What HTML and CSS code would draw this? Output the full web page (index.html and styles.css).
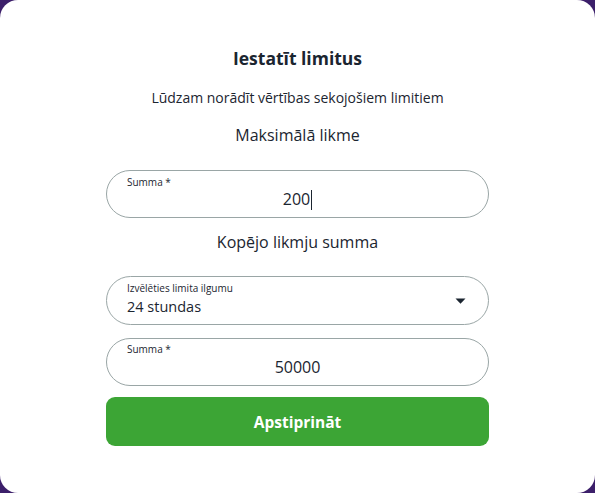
FILE: index.html
```html
<!DOCTYPE html>
<html lang="lv">
<head>
<meta charset="utf-8">
<link rel="stylesheet" href="styles.css">
</head>
<body>
<div class="card">
  <div class="content">
    <h1 class="title">Iestatīt limitus</h1>
    <p class="subtitle">Lūdzam norādīt vērtības sekojošiem limitiem</p>
    <h2 class="section">Maksimālā likme</h2>
    <div class="field field-center">
      <span class="label">Summa *</span>
      <span class="value">200<span class="caret"></span></span>
    </div>
    <h2 class="section section-2">Kopējo likmju summa</h2>
    <div class="field field-select">
      <div class="select-text">
        <span class="label">Izvēlēties limita ilgumu</span>
        <span class="value value-left">24 stundas</span>
      </div>
      <svg class="arrow" width="11" height="6" viewBox="0 0 11 6"><path d="M0.5 0.5 H10.5 L5.5 5.8 Z" fill="#1b2530"/></svg>
    </div>
    <div class="field field-center field-3">
      <span class="label">Summa *</span>
      <span class="value">50000</span>
    </div>
    <button class="btn">Apstiprināt</button>
  </div>
</div>
</body>
</html>
```
FILE: styles.css
```css
html, body {
  margin: 0;
  padding: 0;
  height: 100%;
}
body {
  background: #3c1f6a;
  font-family: "Open Sans", "Noto Sans", sans-serif;
  color: #1b2530;
}
.card {
  background: #fff;
  height: 493px;
  border-radius: 18px;
  display: flex;
  justify-content: center;
}
.content {
  width: 383px;
  display: flex;
  flex-direction: column;
  align-items: stretch;
  padding-top: 46px;
}
.title {
  margin: 0;
  font-size: 17.5px;
  font-weight: 700;
  text-align: center;
  line-height: 24px;
}
.subtitle {
  margin: 18px 0 0;
  font-size: 14px;
  text-align: center;
  line-height: 20px;
}
.section {
  margin: 16px 0 0;
  font-size: 16px;
  font-weight: 400;
  text-align: center;
  line-height: 22px;
}
.field {
  box-sizing: border-box;
  height: 48px;
  border: 1px solid #9aa6a6;
  border-radius: 25px;
  margin-top: 24px;
  position: relative;
}
.label {
  font-size: 10px;
  line-height: 12px;
  display: block;
}
.field-center {
  display: flex;
  align-items: flex-end;
  justify-content: center;
  padding-bottom: 7px;
}
.field-center .label {
  position: absolute;
  left: 20px;
  top: 5px;
}
.value {
  font-size: 16px;
  line-height: 22px;
}
.caret {
  display: inline-block;
  width: 1px;
  height: 20px;
  background: #1b2530;
  vertical-align: -5px;
  margin-left: 1px;
}
.section-2 {
  margin-top: 13px;
}
.field-select {
  height: 49px;
  display: flex;
  align-items: center;
  justify-content: space-between;
  padding: 0 22px 0 20px;
  margin-top: 23px;
}
.select-text {
  display: flex;
  flex-direction: column;
  align-self: flex-start;
  padding-top: 5px;
}
.value-left {
  font-size: 14.5px;
  line-height: 20px;
  margin-top: 3px;
}
.field-3 {
  margin-top: 13px;
}
.field-3 .label {
  top: 4px;
}
.btn {
  margin-top: 11px;
  height: 49px;
  border: none;
  border-radius: 9px;
  background: #3ca535;
  color: #fff;
  font-family: "Open Sans", "Noto Sans", sans-serif;
  font-size: 15.5px;
  font-weight: 700;
}
```
